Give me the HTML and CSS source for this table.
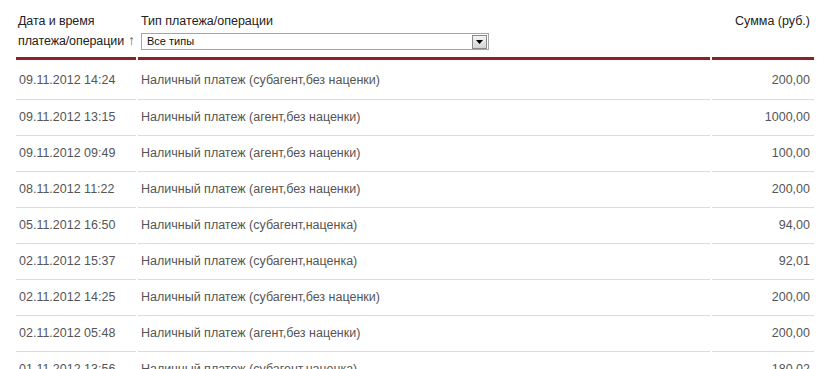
FILE: index.html
```html
<!DOCTYPE html>
<html>
<head>
<meta charset="utf-8">
<link rel="stylesheet" href="styles.css">
</head>
<body>
<div class="table">
  <div class="th th-date">Дата и время<br>платежа/операции<span class="sort">↑</span></div>
  <div class="th th-type">
    <div>Тип платежа/операции</div>
    <div class="select"><span class="select-text">Все типы</span><span class="select-btn"><svg width="7" height="4" viewBox="0 0 7 4"><path d="M0 0H7L3.5 4Z" fill="#000"/></svg></span></div>
  </div>
  <div class="th th-sum">Сумма (руб.)</div>

  <div class="td first">09.11.2012 14:24</div><div class="td first">Наличный платеж (субагент,без наценки)</div><div class="td num first">200,00</div>
  <div class="td">09.11.2012 13:15</div><div class="td">Наличный платеж (агент,без наценки)</div><div class="td num">1000,00</div>
  <div class="td">09.11.2012 09:49</div><div class="td">Наличный платеж (агент,без наценки)</div><div class="td num">100,00</div>
  <div class="td">08.11.2012 11:22</div><div class="td">Наличный платеж (агент,без наценки)</div><div class="td num">200,00</div>
  <div class="td">05.11.2012 16:50</div><div class="td">Наличный платеж (субагент,наценка)</div><div class="td num">94,00</div>
  <div class="td">02.11.2012 15:37</div><div class="td">Наличный платеж (субагент,наценка)</div><div class="td num">92,01</div>
  <div class="td">02.11.2012 14:25</div><div class="td">Наличный платеж (субагент,без наценки)</div><div class="td num">200,00</div>
  <div class="td">02.11.2012 05:48</div><div class="td">Наличный платеж (агент,без наценки)</div><div class="td num">200,00</div>
  <div class="td">01.11.2012 13:56</div><div class="td">Наличный платеж (субагент,наценка)</div><div class="td num">180,02</div>
</div>
</body>
</html>
```

FILE: styles.css
```css
html, body {
  margin: 0;
  padding: 0;
  background: #fff;
  overflow: hidden;
}
body {
  font-family: "Liberation Sans", Arial, sans-serif;
  font-size: 12.5px;
}
.table {
  display: grid;
  grid-template-columns: 120px 572px 102px;
  column-gap: 2px;
  margin-left: 16px;
}
.th {
  color: #222;
  line-height: 19px;
  padding: 12px 3px 7px 2px;
  border-bottom: 3px solid #8e2127;
  height: 38px;
  white-space: nowrap;
}
.th-date {
  padding-right: 0;
  letter-spacing: -0.1px;
}
.th-type {
  padding-left: 3px;
}
.th-sum {
  text-align: right;
  padding-right: 4px;
}
.sort {
  color: #666;
  font-size: 14px;
  margin-left: 4px;
}
.select {
  display: flex;
  align-items: center;
  justify-content: space-between;
  width: 346px;
  height: 15px;
  border: 1px solid #a5a5a5;
  margin-top: 2px;
  background: #fff;
}
.select-text {
  font-size: 11px;
  line-height: 15px;
  padding-left: 5px;
  color: #111;
}
.select-btn {
  display: flex;
  align-items: center;
  justify-content: center;
  width: 15px;
  height: 14px;
  margin-right: 1px;
  border: 1px solid #8a8a8a;
  box-sizing: border-box;
  background: linear-gradient(#f4f4f4, #d4d4d4);
}
.td {
  color: #555;
  height: 35px;
  line-height: 35px;
  border-bottom: 1px solid #dcdcdc;
  padding-left: 3px;
  white-space: nowrap;
}
.td.first {
  height: 38px;
  line-height: 38px;
  padding-top: 1px;
}
.num {
  text-align: right;
  padding-right: 4px;
}
```
